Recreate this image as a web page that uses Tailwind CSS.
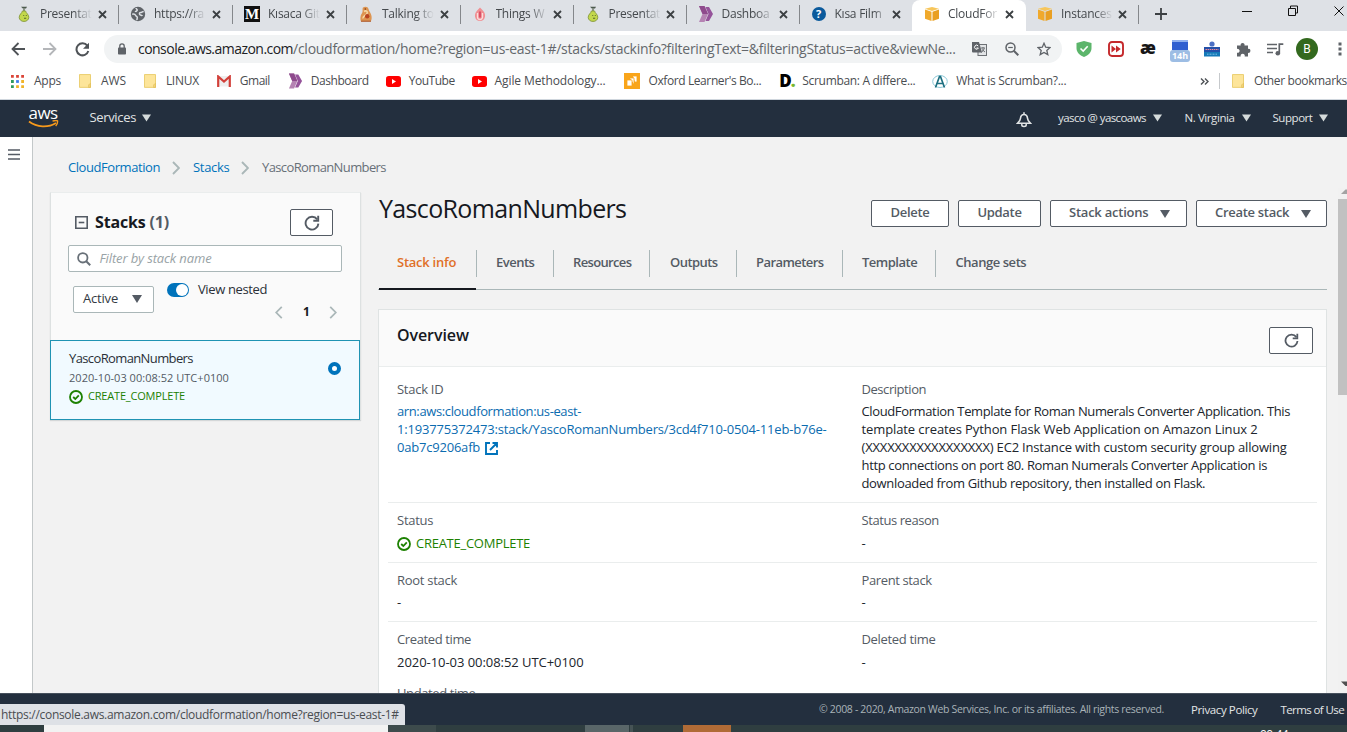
<!DOCTYPE html>
<html lang="en">
<head>
<meta charset="utf-8">
<title>CloudFormation - Stack YascoRomanNumbers</title>
<script src="https://cdn.jsdelivr.net/npm/@tailwindcss/browser@4"></script>
</head>
<body class="w-[1347px] h-[732px] overflow-hidden bg-white font-['Open_Sans',sans-serif] text-[13px] text-[#16191f] flex flex-col whitespace-nowrap">

<svg class="hidden">
  <symbol id="x" viewBox="0 0 9 9"><path d="M1 1l7 7M8 1L1 8" stroke="#3c4043" stroke-width="1.8" fill="none"/></symbol>
  <symbol id="pear" viewBox="0 0 16 16"><path d="M5 .8h6l-1 1.700H6.800z" fill="#4c5a4e"/><path d="M8 2.500v2.500" stroke="#56644a" stroke-width="1.200"/><path d="M6.400 5h3.200c.3 2.200 3.200 3.300 3.200 6.300A4.400 4.200 0 0 1 8 15.400a4.400 4.200 0 0 1-4.800-4.100C3.200 8.300 6.100 7.200 6.400 5z" fill="#c3d84c" stroke="#84993b" stroke-width=".9"/><path d="M7.300 9.500h.9M9.800 9.500h.9M8 12.200h2.200" stroke="#55652b" stroke-width="1.100"/></symbol>
  <symbol id="chev" viewBox="0 0 16 16"><path d="M1 0h5.500l3.500 8-3.500 8H1l3.500-8z" fill="#b583b3"/><path d="M7.500 1H11l4 7-4 7H7.500l3-7z" fill="#95539a"/><path d="M1 0h5.500l3.500 8H4.500z" fill="#8e4a8c"/></symbol>
  <symbol id="cube" viewBox="0 0 16 16"><path d="M1 2.800L8 1l7 1.800L8 5z" fill="#f7c65b"/><path d="M1 3.600l6.500 2.100V15L1 12.800z" fill="#f0a92c"/><path d="M15 3.600L8.500 5.700V15l6.500-2.200z" fill="#e99f22"/></symbol>
  <symbol id="folder" viewBox="0 0 13 15"><path d="M.5.5h12v13.900H.5z" fill="#fde59a" stroke="#e9cb69"/><path d="M10.500 14.500v-3l2-1.300v4.300z" fill="#f6d77b" stroke="#dcb84f" stroke-width=".6"/></symbol>
  <symbol id="yt" viewBox="0 0 15 11"><rect width="15" height="11" rx="2.800" fill="#f00"/><path d="M6 3.100v4.800l4-2.400z" fill="#fff"/></symbol>
  <symbol id="down" viewBox="0 0 10 8"><path d="M0 0h10L5 8z" fill="currentColor"/></symbol>
  <symbol id="refresh" viewBox="0 0 16 16"><path d="M13.200 4.400A6.400 6.400 0 1 0 14.400 8.600" fill="none" stroke="#545b64" stroke-width="1.900"/><path d="M14.200.8v4.900H9.300" fill="none" stroke="#545b64" stroke-width="1.900"/></symbol>
  <symbol id="ok" viewBox="0 0 14 14"><circle cx="7" cy="7" r="6" fill="none" stroke="#1d8102" stroke-width="1.800"/><path d="M4.200 7l2.100 2L9.800 5.300" fill="none" stroke="#1d8102" stroke-width="1.800"/></symbol>
  <symbol id="crumb" viewBox="0 0 8 14"><path d="M1 1l6 6-6 6" fill="none" stroke="#aab7b8" stroke-width="1.900"/></symbol>
</svg>

<!-- Browser tabs -->
<div class="h-[31px] shrink-0 bg-[#dee1e6] flex items-stretch pl-[5px] text-[12px] text-[#45494d] tracking-[-0.25px] relative">
  <div class="w-[114px] flex items-center pl-[11px] pb-[3px]"><svg class="size-4"><use href="#pear"/></svg><span class="ml-2 w-[52px] mask-r-from-65%">Presentat</span><svg class="size-[9px] ml-[6px]"><use href="#x"/></svg></div>
  <div class="w-[113.500px] flex items-center pl-[11px] pb-[3px]"><svg class="size-4" viewBox="0 0 16 16"><circle cx="8" cy="8" r="7.200" fill="#5f6368"/><path d="M2.200 8.200c1.500-.3 3 .2 3.500 1.300s1.600.8 1.600 2-.6 1.400-.3 2.600M13.700 5.500c-1.200 0-1.500 1-2.700.9s-1.700.5-1.500 1.700 2.300.9 3 1.800M6 2c.2 1.200 1.500 1 1.200 2.200S5.600 5 5.300 6" stroke="#dee1e6" stroke-width="1.500" fill="none"/></svg><span class="ml-2 w-[52px] mask-r-from-65%">https://ra</span><svg class="size-[9px] ml-[6px]"><use href="#x"/></svg></div>
  <div class="w-[113.500px] flex items-center pl-[11.500px] pb-[3px]"><span class="size-4 bg-[#111] text-white font-['Liberation_Serif',serif] font-bold text-[15px] leading-4 text-center">M</span><span class="ml-2 w-[52px] mask-r-from-65%">Kısaca Git</span><svg class="size-[9px] ml-[6px]"><use href="#x"/></svg></div>
  <div class="w-[113.500px] flex items-center pl-[12px] pb-[3px]"><svg class="size-4" viewBox="0 0 16 16"><path d="M5 1.500c2-1.500 5-1 5.500 1.500s2.500 4 3 7-.2 4.500-1 5.500H3c-1-2-.8-6 .8-8S4 3 5 1.500z" fill="#dd9450"/><path d="M6 5.500c2-1.500 4 0 3 2S4.500 10 5 12.500" stroke="#f6d7a4" stroke-width="1.600" fill="none"/><circle cx="9.200" cy="10.300" r="2.200" fill="#b8431f"/><path d="M3 15.200h10" stroke="#a8542a"/><circle cx="7.300" cy="3" r=".8" fill="#7a3514"/></svg><span class="ml-2 w-[52px] mask-r-from-65%">Talking to</span><svg class="size-[9px] ml-[6px]"><use href="#x"/></svg></div>
  <div class="w-[113px] flex items-center pl-[12px] pb-[3px]"><svg class="size-4" viewBox="0 0 16 16"><path d="M8 1.500C5.500 4 2.500 6.500 3 10.500c.4 3 2.500 4.500 5 4.500s4.600-1.500 5-4.500c.5-4-2.500-6.500-5-9z" fill="#f08f92"/><path d="M5.500 7v4a2.500 2.500 0 0 0 5 0V7" stroke="#fbdcdc" stroke-width="1.300" fill="none"/><path d="M8 5.500v6" stroke="#d6405c" stroke-width="1.600"/></svg><span class="ml-[8px] w-[52px] mask-r-from-65%">Things W</span><svg class="size-[9px] ml-[5px]"><use href="#x"/></svg></div>
  <div class="w-[113px] flex items-center pl-[12px] pb-[3px]"><svg class="size-4"><use href="#pear"/></svg><span class="ml-2 w-[52px] mask-r-from-65%">Presentat</span><svg class="size-[9px] ml-[5px]"><use href="#x"/></svg></div>
  <div class="w-[113px] flex items-center pl-[12px] pb-[3px]"><svg class="size-4"><use href="#chev"/></svg><span class="ml-2 w-[52px] mask-r-from-65%">Dashboa</span><svg class="size-[9px] ml-[5px]"><use href="#x"/></svg></div>
  <div class="w-[113.500px] flex items-center pl-[12px] pb-[3px]"><span class="size-[14px] ml-px rounded-full bg-[#0b5a9c] text-white font-bold text-[11px] leading-[14px] text-center">?</span><span class="ml-[9px] w-[52px] mask-r-from-75%">Kısa Film</span><svg class="size-[9px] ml-[5px]"><use href="#x"/></svg></div>
  <div class="w-[114px] flex items-center pl-[12px] pb-[3px] bg-white rounded-t-lg"><svg class="size-4"><use href="#cube"/></svg><span class="ml-2 w-[52px] mask-r-from-65%">CloudFor</span><svg class="size-[9px] ml-[5px]"><use href="#x"/></svg></div>
  <div class="w-[112px] flex items-center pl-[11px] pb-[3px]"><svg class="size-4"><use href="#cube"/></svg><span class="ml-2 w-[52px] mask-r-from-65%">Instances</span><svg class="size-[9px] ml-[5px]"><use href="#x"/></svg></div>
  <svg class="absolute left-0 top-[5px] w-[1347px] h-[20px]"><path d="M118.500 0v19M232.500 0v19M346.500 0v19M460.500 0v19M573.500 0v19M686.500 0v19M799.500 0v19M1138.500 0v19" stroke="#84878b"/></svg>
  <svg class="w-3 h-3 mt-2 ml-[17px]" viewBox="0 0 12 12"><path d="M6 0v12M0 6h12" stroke="#3c4043" stroke-width="1.800"/></svg>
  <svg class="w-[11px] h-3 mt-[5px] ml-[75px]" viewBox="0 0 11 12"><path d="M0 6.500h10" stroke="#111"/></svg>
  <svg class="w-[11px] h-3 mt-[5px] ml-[35px]" viewBox="0 0 11 12"><path d="M.5 3.500h7v7h-7zM2.500 3.500v-2.500h7v7H7.500" stroke="#111" fill="none"/></svg>
  <svg class="w-[11px] h-3 mt-[5px] ml-[35px]" viewBox="0 0 11 12"><path d="M.5 1.500l9 9M9.500 1.500l-9 9" stroke="#111" fill="none"/></svg>
</div>

<!-- Address bar -->
<div class="h-[35px] shrink-0 flex items-center pt-px pl-[11px]">
  <svg class="w-[14px] h-[14px]" viewBox="0 0 14 14"><path d="M14 7H1.500M7.500 1L1.500 7l6 6" stroke="#4f5357" stroke-width="1.800" fill="none"/></svg>
  <svg class="w-[14px] h-[14px] ml-[18px]" viewBox="0 0 14 14"><path d="M0 7h12.500M6.500 1l6 6-6 6" stroke="#b4b6b9" stroke-width="1.800" fill="none"/></svg>
  <svg class="w-[15px] h-[15px] ml-[18px]" viewBox="0 0 15 15"><path d="M12.300 3.700A6 6 0 1 0 13.300 9" stroke="#4f5357" stroke-width="2" fill="none"/><path d="M14 .7v6H8z" fill="#4f5357"/></svg>
  <div class="w-[958px] h-[28px] ml-[14px] rounded-full bg-[#f1f3f4] flex items-center pl-[14px]">
    <svg class="w-[8px] h-[12px]" viewBox="0 0 8 12"><rect y="4.500" width="8" height="7" rx=".8" fill="#5f6368"/><path d="M1.800 5V3a2.200 2.200 0 0 1 4.400 0v2" stroke="#5f6368" stroke-width="1.300" fill="none"/></svg>
    <div class="ml-[12px] w-[829px] text-[14px] leading-7 text-[#64686c]"><span class="text-[#202124] tracking-[-0.53px]">console.aws.amazon.com</span><span class="tracking-[-0.27px]">/cloudformation/home?region=us-east-1#/stacks/stackinfo?filteringText=&amp;filteringStatus=active&amp;viewNe...</span></div>
    <svg class="w-[15px] h-[14px] ml-[5px]" viewBox="0 0 15 14"><rect x="6" y="2.500" width="8.500" height="11" fill="#e3e5e7" stroke="#6d7175"/><path d="M0 0h7l3 10.500H1a1 1 0 0 1-1-1z" fill="#5f6368"/><path d="M6.200 4a2 2 0 1 0 .2 2H4.500" stroke="#fff" fill="none"/><path d="M9 6h4M11 5v1.500M12.500 6.500l-3 4M10 7.500l3 2.500" stroke="#5f6368" stroke-width=".9"/></svg>
    <svg class="w-[14px] h-[14px] ml-[18px]" viewBox="0 0 14 14"><circle cx="5.500" cy="5.500" r="4.500" fill="none" stroke="#5f6368" stroke-width="1.500"/><path d="M8.800 8.800L13.300 13.300" stroke="#5f6368" stroke-width="2"/><path d="M3.200 5.500h4.600" stroke="#5f6368" stroke-width="1.200"/></svg>
    <svg class="w-[14px] h-[14px] ml-[18px]" viewBox="0 0 14 14"><path d="M7 1.300l1.700 3.900 4.300.4-3.200 2.800 1 4.200L7 10.400l-3.800 2.200 1-4.200L1 5.600l4.300-.4z" fill="none" stroke="#5f6368" stroke-width="1.300"/></svg>
  </div>
  <svg class="w-[16px] h-[16px] ml-[14px]" viewBox="0 0 16 16"><path d="M8 0l7.500 2v5c0 4-3 7.500-7.500 9C3.500 14.500.5 11 .5 7V2z" fill="#5cb56b"/><path d="M4.500 7.500L7.200 10l4.500-4.800" stroke="#fff" stroke-width="1.600" fill="none"/></svg>
  <svg class="w-[16px] h-[16px] ml-[16px]" viewBox="0 0 16 16"><rect x="1" y="1" width="14" height="14" rx="3" fill="#fff" stroke="#c5292c" stroke-width="1.900"/><path d="M3.500 4.500L8 8l-4.500 3.500zM8 4.500L12.700 8 8 11.500z" fill="#c5292c"/></svg>
  <span class="ml-[16px] w-[16px] text-[17px] leading-4 font-extrabold text-[#161616] tracking-[-0.500px] pb-[3px]">æ</span>
  <div class="ml-[14px] w-[20px] h-[22px] mt-[3px] flex flex-col items-center"><div class="w-4 h-[10px] bg-[#2f5fd0] border-t-2 border-[#8fb0ee]"></div><div class="w-5 h-[12px] rounded-[3px] bg-[#9dbde4] text-white text-[9px] leading-[12px] font-bold text-center">14h</div></div>
  <svg class="w-[16px] h-[16px] ml-[14px]" viewBox="0 0 16 16"><circle cx="8" cy="3" r="2.600" fill="#4b6fc4"/><rect y="6" width="16" height="5" fill="#2450a8"/><path d="M1.500 8.500h13" stroke="#e98a9a" stroke-dasharray="1.500 .6"/><rect y="11" width="16" height="4.500" fill="#1479b8"/><path d="M3 13.200h10" stroke="#7cc0e6" stroke-dasharray="1 .5"/></svg>
  <svg class="w-[15px] h-[15px] ml-[16px]" viewBox="0 0 15 15"><path d="M1 3.500h3.700a2 2 0 1 1 3.800 0H12v3.400a2 2 0 1 1 0 3.900v3.700H8.700a2.100 2.100 0 1 0-4 0H1v-3.800a2 2 0 1 0 0-3.800z" fill="#5f6368"/></svg>
  <svg class="w-[17px] h-[13px] ml-[16px]" viewBox="0 0 17 13"><path d="M0 1.500h10M0 5.500h10M0 9.500h6M12.300 10V1.200h4" stroke="#5f6368" stroke-width="1.700" fill="none"/><circle cx="10.800" cy="10.300" r="2.300" fill="#5f6368"/></svg>
  <div class="ml-[12px] size-[22px] rounded-full bg-[#33691e] text-white text-[12px] leading-[22px] text-center font-['Roboto',sans-serif]">B</div>
  <svg class="w-[4px] h-[14px] ml-[20px]" viewBox="0 0 4 14"><path d="M2 .5v3M2 5.500v3M2 10.500v3" stroke="#5f6368" stroke-width="3"/></svg>
</div>

<!-- Bookmarks -->
<div class="h-[34px] shrink-0 border-b border-[#cfd6dd] flex items-center pb-[3px] pl-[11px] text-[12px] text-[#4a4d51]">
  <svg class="w-[13px] h-[13px]" viewBox="0 0 14 14"><path d="M0 1.500h3M5.500 1.500h3M11 1.500h3" stroke="#db4437" stroke-width="3"/><path d="M0 7h3M0 12.500h3" stroke="#2f9a5d" stroke-width="3"/><path d="M5.500 7h3" stroke="#3b7ded" stroke-width="3"/><path d="M11 7h3M11 12.500h3M5.500 12.500h3" stroke="#f0b429" stroke-width="3"/></svg>
  <span class="ml-[10px] w-[45px] tracking-[-0.25px]">Apps</span>
  <svg class="w-[12px] h-[14px]"><use href="#folder"/></svg><span class="ml-[10px] w-[43px] tracking-[-0.08px]">AWS</span>
  <svg class="w-[12px] h-[14px]"><use href="#folder"/></svg><span class="ml-[10px] w-[51px] tracking-[-0.27px]">LINUX</span>
  <svg class="w-[14px] h-[12px]" viewBox="0 0 14 12"><path d="M1 1h12v10.500H1z" fill="#eee"/><path d="M1.200 12V1.500L7 6.500l5.800-5V12" fill="none" stroke="#d2403a" stroke-width="2.200"/></svg><span class="ml-[9px] w-[48px] tracking-[-0.51px]">Gmail</span>
  <svg class="w-[15px] h-[16px]"><use href="#chev"/></svg><span class="ml-[8px] w-[75px] tracking-[-0.44px]">Dashboard</span>
  <svg class="w-[15px] h-[11px]"><use href="#yt"/></svg><span class="ml-[8px] w-[63px] tracking-[-0.48px]">YouTube</span>
  <svg class="w-[15px] h-[11px]"><use href="#yt"/></svg><span class="ml-[8px] w-[130px] tracking-[-0.11px]">Agile Methodology...</span>
  <svg class="w-[16px] h-[16px]" viewBox="0 0 16 16"><rect width="16" height="16" fill="#f9a51a"/><path d="M3 7h5v6H3zM6 5h4v6M9 3h4v6h-2" fill="#fff" stroke="#f9a51a" stroke-width=".8"/></svg><span class="ml-[8px] w-[131px] tracking-[-0.40px]">Oxford Learner's Bo...</span>
  <span class="w-[14px] text-[17px] leading-4 font-extrabold text-black tracking-[-1px]">D<span class="text-[#7ab82c]">.</span></span><span class="ml-[9px] w-[130px] tracking-[-0.33px]">Scrumban: A differe...</span>
  <svg class="w-[16px] h-[15px]" viewBox="0 0 16 15"><ellipse cx="8" cy="7.500" rx="7.300" ry="6" fill="none" stroke="#8cc7d6"/><path d="M3.500 13.500L7.500 2.500h1l4 11M5.500 9.500h5" stroke="#1c6f80" stroke-width="1.700" fill="none"/></svg><span class="ml-[8px] w-[244px] tracking-[-0.30px]">What is Scrumban?...</span>
  <svg class="w-[9px] h-[7px]" viewBox="0 0 9 7"><path d="M1 .5l3 3-3 3M5 .5l3 3-3 3" stroke="#4f5357" stroke-width="1.400" fill="none"/></svg>
  <div class="w-px h-4 bg-[#c6c9cc] ml-[10px]"></div>
  <svg class="w-[12px] h-[14px] ml-[12px]"><use href="#folder"/></svg><span class="ml-[10px] tracking-[-0.37px]">Other bookmarks</span>
</div>

<!-- Console navigation -->
<div class="h-[37px] shrink-0 bg-[#232f3e] flex items-center pb-[2px] text-[12px] text-[#e1e4e5] font-medium">
  <div class="w-[32px] ml-[27px] flex flex-col items-center">
    <span class="text-[17px] leading-[12px] text-white font-medium tracking-[-0.600px] pb-px">aws</span>
    <svg class="w-[31px] h-[8px]" viewBox="0 0 31 8"><path d="M1 1.500c8 6 19 6.500 27 1.500" stroke="#f79a1c" stroke-width="1.800" fill="none"/><path d="M24.500 1.200c2-.8 4-.8 5-.4.300 1.800-.4 3.800-1.800 5.200" stroke="#f79a1c" stroke-width="1.400" fill="none"/></svg>
  </div>
  <span class="ml-[30.500px] w-[52px] text-[13px] tracking-[-0.34px]">Services</span>
  <svg class="w-[9px] h-[8px] mt-px text-[#d5dbdb]"><use href="#down"/></svg>
  <svg class="w-[16px] h-[16px] ml-[865px] mt-[4px]" viewBox="0 0 16 16"><path d="M8 .3v2M1.500 11.300c2-2 3-3.500 3-5C4.700 4 6 2.500 8 2.500s3.300 1.500 3.500 3.800c0 1.500 1 3 3 5z" stroke="#e1e4e5" stroke-width="1.600" fill="none"/><path d="M5.800 12v1c0 2 4.400 2 4.400 0v-1" stroke="#e1e4e5" stroke-width="1.500" fill="none"/></svg>
  <span class="ml-[26.500px] w-[95px] text-[11.500px] tracking-[-0.58px]">yasco @ yascoaws</span><svg class="w-[9px] h-[8px] mt-px text-[#d5dbdb]"><use href="#down"/></svg>
  <span class="ml-[22.500px] w-[57px] text-[11.500px] tracking-[-0.42px]">N. Virginia</span><svg class="w-[9px] h-[8px] mt-px text-[#d5dbdb]"><use href="#down"/></svg>
  <span class="ml-[22px] w-[46px] text-[11.500px] tracking-[-0.45px]">Support</span><svg class="w-[9px] h-[8px] mt-px text-[#d5dbdb]"><use href="#down"/></svg>
</div>

<!-- Page -->
<div class="h-[556px] shrink-0 flex bg-[#f2f2f2] overflow-hidden">
  <div class="w-[33px] shrink-0 bg-white border-r border-[#c3c8c9] pt-[12px] pl-[8px]">
    <svg class="w-[12px] h-[11px]" viewBox="0 0 12 11"><path d="M0 1h12M0 5.500h12M0 10h12" stroke="#545b64" stroke-width="1.600"/></svg>
  </div>
  <div class="w-[1305px] shrink-0 flex flex-col">
    <div class="h-[55px] shrink-0 flex items-center pl-[35px] pt-[6px] text-[#0073bb]">
      <span class="w-[104px] tracking-[-0.43px]">CloudFormation</span><svg class="w-[8px] h-[14px]"><use href="#crumb"/></svg>
      <span class="ml-[13px] w-[48px] tracking-[-0.29px]">Stacks</span><svg class="w-[8px] h-[14px]"><use href="#crumb"/></svg>
      <span class="ml-[13px] text-[#687078] tracking-[-0.62px]">YascoRomanNumbers</span>
    </div>
    <div class="flex items-start pl-[17px]">
      <!-- Stack list -->
      <div class="w-[311px] shrink-0 bg-[#fafafa] border border-t-[#eaeded] border-[#dde1e1] shadow-[0_1px_1px_rgba(0,28,36,0.12)]">
        <div class="h-[147px] flex flex-col">
          <div class="h-[27px] mt-[16px] ml-[24px] mr-[27px] flex items-center">
            <svg class="w-[13px] h-[13px]" viewBox="0 0 13 13"><path d="M.8.8h11.400v11.400H.8z" fill="none" stroke="#545b64" stroke-width="1.600"/><path d="M3.700 6.500h5.600" stroke="#545b64" stroke-width="1.600"/></svg>
            <span class="ml-[7px] -mt-[2px] text-[16px] font-bold tracking-[-0.17px]">Stacks <span class="text-[#545b64]">(1)</span></span>
            <div class="ml-auto w-[43px] h-[27px] border border-[#545b64] rounded-[2px] bg-white flex items-center justify-center"><svg class="size-4"><use href="#refresh"/></svg></div>
          </div>
          <div class="mt-[9px] ml-[17px] w-[274px] h-[27px] bg-white border border-[#aab7b8] rounded-[2px] flex items-center pl-[8px]">
            <svg class="size-[14px]" viewBox="0 0 14 14"><circle cx="5.800" cy="5.800" r="4.700" fill="none" stroke="#687078" stroke-width="1.800"/><path d="M9.200 9.200l4 4" stroke="#687078" stroke-width="2"/></svg>
            <span class="ml-[8.500px] italic text-[#99a3a6] tracking-[-0.12px]">Filter by stack name</span>
          </div>
          <div class="flex mt-[14px] pl-[22px]">
            <div class="w-[81px] h-[27px] bg-white border border-[#aab7b8] rounded-[2px] flex items-center pb-px pl-[9px] text-[#333a43]"><span class="w-[48.500px] tracking-[-0.19px]">Active</span><svg class="w-[10px] h-[8px] text-[#545b64]"><use href="#down"/></svg></div>
            <div class="ml-[13px] mt-[-5px]">
              <div class="flex items-center h-[17px]"><div class="w-[22px] h-[14px] rounded-full bg-[#0073bb] flex justify-end items-center pr-px"><div class="size-[12px] rounded-full bg-white"></div></div><span class="ml-[9px] tracking-[-0.38px] text-[#2a3038]">View nested</span></div>
              <div class="flex items-center ml-[108px] mt-[7px] h-[14px]"><svg class="w-[8px] h-[13px] rotate-180"><use href="#crumb"/></svg><span class="ml-[20px] w-[7px] text-[12px] font-bold">1</span><svg class="w-[8px] h-[13px] ml-[19px]"><use href="#crumb"/></svg></div>
            </div>
          </div>
        </div>
        <div class="-mx-px -mb-px h-[80px] w-[310px] border border-[#1f93b3] bg-[#f1faff] flex justify-between pl-[18px] pr-[18px] pt-[8px]">
          <div>
            <div class="leading-[18px] tracking-[-0.62px] text-[#2a3038]">YascoRomanNumbers</div>
            <div class="text-[11px] leading-[20px] mt-px tracking-[0.03px] text-[#545b64]">2020-10-03 00:08:52 UTC+0100</div>
            <div class="text-[11px] leading-[18px] text-[#1d8102] flex items-center"><svg class="size-[14px] mr-[5px]"><use href="#ok"/></svg><span class="tracking-[-0.19px] -mt-px">CREATE_COMPLETE</span></div>
          </div>
          <div class="size-[13px] mt-[12.500px] rounded-full border-4 border-[#0073bb] bg-white"></div>
        </div>
      </div>

      <!-- Stack detail -->
      <div class="ml-[17px] w-[949px] shrink-0">
        <div class="flex items-center h-[43px] text-[#545b64] font-semibold">
          <h1 class="text-[25px] font-normal text-[#16191f] tracking-[-0.65px] w-[493px] -mt-[9px] pl-px">YascoRomanNumbers</h1>
          <div class="w-[78px] h-[27px] pb-px border border-[#545b64] rounded-[2px] bg-white flex items-center justify-center tracking-[-0.28px]">Delete</div>
          <div class="ml-[9px] w-[83px] h-[27px] pb-px border border-[#545b64] rounded-[2px] bg-white flex items-center justify-center tracking-[-0.31px]">Update</div>
          <div class="ml-[9px] w-[137px] h-[27px] pb-px border border-[#545b64] rounded-[2px] bg-white flex items-center pl-[18px]"><span class="w-[91px] tracking-[-0.23px]">Stack actions</span><svg class="w-[10px] h-[8px] mt-px"><use href="#down"/></svg></div>
          <div class="ml-[9px] w-[131px] h-[27px] pb-px border border-[#545b64] rounded-[2px] bg-white flex items-center pl-[18px]"><span class="w-[86px] tracking-[-0.30px]">Create stack</span><svg class="w-[10px] h-[8px] mt-px"><use href="#down"/></svg></div>
        </div>
        <div class="h-[55px] border-b border-[#aab7b8] flex font-semibold text-[#545b64] pt-[15px] pl-px leading-[25px]">
          <div class="w-[97px] h-[40px] border-b-2 border-[#16191f] pl-[18px] text-[#e07028] tracking-[-0.25px] -mb-px">Stack info</div>
          <div class="w-[77px] h-[27px] border-l border-[#aab7b8] pl-[19px] tracking-[-0.50px]">Events</div>
          <div class="w-[96px] h-[27px] border-l border-[#aab7b8] pl-[19px] tracking-[-0.65px]">Resources</div>
          <div class="w-[87px] h-[27px] border-l border-[#aab7b8] pl-[20px] tracking-[-0.55px]">Outputs</div>
          <div class="w-[106px] h-[27px] border-l border-[#aab7b8] pl-[19px] tracking-[-0.55px]">Parameters</div>
          <div class="w-[93px] h-[27px] border-l border-[#aab7b8] pl-[19px] tracking-[-0.50px]">Template</div>
          <div class="h-[27px] border-l border-[#aab7b8] pl-[19.500px] tracking-[-0.45px]">Change sets</div>
        </div>
        <div class="mt-[19px] h-[420px] bg-white border border-[#dfe3e3]">
          <div class="h-[57px] bg-[#fafafa] border-b border-[#eaeded] flex items-center pl-[18px] pr-[13px]">
            <span class="text-[16px] font-semibold tracking-[-0.08px] -mt-[6px]">Overview</span>
            <div class="ml-auto mt-[4px] w-[44px] h-[27px] border border-[#545b64] rounded-[2px] bg-white flex items-center justify-center"><svg class="size-[15px]"><use href="#refresh"/></svg></div>
          </div>
          <div class="mx-[9px] text-[13px] leading-[18px] text-[#20252c]">
            <div class="h-[136px] border-b border-[#eaeded] flex pl-[9px] pt-[13px]">
              <div class="w-[464.500px]">
                <div class="text-[#545b64] tracking-[-0.27px] mb-[4px]">Stack ID</div>
                <div class="text-[#0b6cb0]"><div class="tracking-[-0.38px]">arn:aws:cloudformation:us-east-</div><div class="tracking-[-0.18px]">1:193775372473:stack/YascoRomanNumbers/3cd4f710-0504-11eb-b76e-</div><div class="flex items-center tracking-[-0.21px]">0ab7c9206afb<svg class="size-[13px] ml-[5px] mt-[2px]" viewBox="0 0 13 13"><path d="M5 1H1v11h11V8M7.500 1H12v4.500M12 1L5 8" fill="none" stroke="#0073bb" stroke-width="1.900"/></svg></div></div>
              </div>
              <div>
                <div class="text-[#545b64] tracking-[-0.44px] mb-[4px]">Description</div>
                <div class="tracking-[-0.37px]">CloudFormation Template for Roman Numerals Converter Application. This</div>
                <div class="tracking-[-0.10px]">template creates Python Flask Web Application on Amazon Linux 2</div>
                <div class="tracking-[-0.18px]">(XXXXXXXXXXXXXXXXX) EC2 Instance with custom security group allowing</div>
                <div class="tracking-[-0.34px]">http connections on port 80. Roman Numerals Converter Application is</div>
                <div class="tracking-[-0.34px]">downloaded from Github repository, then installed on Flask.</div>
              </div>
            </div>
            <div class="h-[60px] border-b border-[#eaeded] flex pl-[9px] pt-[8px]">
              <div class="w-[464.500px]"><div class="text-[#545b64] tracking-[-0.25px]">Status</div><div class="mt-[5px] text-[#1d8102] flex items-center"><svg class="size-[14px] mr-[5px] mt-px"><use href="#ok"/></svg><span class="tracking-[-0.26px]">CREATE_COMPLETE</span></div></div>
              <div><div class="text-[#545b64] tracking-[-0.43px]">Status reason</div><div class="mt-[5px]">-</div></div>
            </div>
            <div class="h-[59px] border-b border-[#eaeded] flex pl-[9px] pt-[8px]">
              <div class="w-[464.500px]"><div class="text-[#545b64] tracking-[-0.28px]">Root stack</div><div class="mt-[4px]">-</div></div>
              <div><div class="text-[#545b64] tracking-[-0.38px]">Parent stack</div><div class="mt-[4px]">-</div></div>
            </div>
            <div class="flex pl-[9px] pt-[8px]">
              <div class="w-[464.500px]"><div class="text-[#545b64] tracking-[-0.38px]">Created time</div><div class="mt-[5px] tracking-[-0.05px]">2020-10-03 00:08:52 UTC+0100</div><div class="mt-[13px] text-[#545b64] tracking-[-0.40px]">Updated time</div></div>
              <div><div class="text-[#545b64] tracking-[-0.32px]">Deleted time</div><div class="mt-[5px]">-</div></div>
            </div>
          </div>
        </div>
      </div>
    </div>
  </div>
  <!-- Scrollbar -->
  <div class="w-[9px] shrink-0 flex flex-col mt-[51px] bg-[#f1f1f1]">
    <svg class="w-[9px] h-[11px]" viewBox="0 0 9 11"><path d="M3 6h6V1.500H7.500z" fill="#a3a3a3"/></svg>
    <div class="h-[196px] bg-[#c1c1c1]"></div>
    <svg class="w-[9px] h-[5px] mt-auto mb-[7px]" viewBox="0 0 9 5"><path d="M3 .5h6V5H7.500z" fill="#505050"/></svg>
  </div>
</div>

<!-- Footer -->
<div class="h-[32px] shrink-0 bg-[#232f3e] border-t border-[#46505c] flex items-center text-[12px] text-[#e3e6e6] relative">
  <span class="ml-[819px] w-[372px] text-[10.500px] text-[#a9b3b8] tracking-[-0.33px]">© 2008 - 2020, Amazon Web Services, Inc. or its affiliates. All rights reserved.</span>
  <span class="w-[89.500px] text-[11.500px] tracking-[-0.38px]">Privacy Policy</span>
  <span class="text-[11.500px] tracking-[-0.60px]">Terms of Use</span>
  <div class="absolute left-0 top-[10px] w-[405px] h-[21px] bg-[#dee1e6] rounded-tr-[3px] pl-px leading-[21px] text-[#4a4d51] tracking-[-0.30px]">https://console.aws.amazon.com/cloudformation/home?region=us-east-1#</div>
</div>

<!-- Taskbar -->
<div class="h-[7px] shrink-0 bg-[#2f3e40] flex overflow-hidden text-white text-[12px]">
  <div class="w-[344px] h-full ml-[44px] bg-[#f2f2f2]"></div>
  <div class="w-[48px] h-full bg-[#3d4b4c]"></div>
  <div class="w-[44px] h-full ml-[149px] bg-[#596668]"></div><div class="w-[3px] h-full ml-px bg-[#465355]"></div>
  <div class="w-[48px] h-full ml-[50px] bg-[#b06b36]"></div>
  <span class="ml-[529px] mt-[2px] leading-[16px] tracking-[-0.500px]">00:44</span>
</div>
</body>
</html>
